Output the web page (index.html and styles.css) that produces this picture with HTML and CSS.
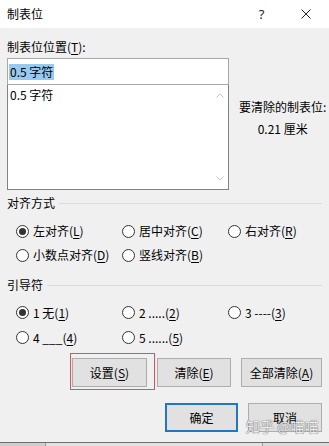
FILE: index.html
```html
<!DOCTYPE html>
<html lang="zh-CN">
<head>
    <meta charset="UTF-8">
    <meta name="viewport" content="width=device-width, initial-scale=1.0">
    <title>制表位</title>
    <link rel="stylesheet" href="styles.css">
</head>
<body>

    <div class="window">
        <div class="titlebar">
            <span class="title">制表位</span>
            <span class="tb-btn help">?</span>
            <span class="tb-btn close">
                <svg width="10" height="10" viewBox="0 0 10 10"><path d="M0.5 0.5 L9.5 9.5 M9.5 0.5 L0.5 9.5" stroke="#222" stroke-width="1" fill="none"/></svg>
            </span>
        </div>

        <div class="dialog">
            <div class="field-label">制表位位置(<u>T</u>):</div>

            <div class="tabs-area">
                <div class="tab-list">
                    <div class="tab-input"><span class="sel">0.5 字符</span></div>
                    <div class="listbox">
                        <div class="list-items">
                            <div class="list-item">0.5 字符</div>
                        </div>
                        <div class="scrollbar">
                            <span class="arrow"><svg width="8" height="5" viewBox="0 0 8 5"><path d="M0.5 4.5 L4 1 L7.5 4.5" stroke="#c4c4c4" fill="none"/></svg></span>
                            <span class="arrow"><svg width="8" height="5" viewBox="0 0 8 5"><path d="M0.5 0.5 L4 4 L7.5 0.5" stroke="#c4c4c4" fill="none"/></svg></span>
                        </div>
                    </div>
                </div>
                <div class="clear-info">
                    <div>要清除的制表位:</div>
                    <div>0.21 厘米</div>
                </div>
            </div>

            <div class="group-head">
                <span>对齐方式</span>
                <span class="rule"></span>
            </div>
            <div class="radio-grid align-grid">
                <label class="radio checked"><span class="dot"></span><span>左对齐(<u>L</u>)</span></label>
                <label class="radio"><span class="dot"></span><span>居中对齐(<u>C</u>)</span></label>
                <label class="radio"><span class="dot"></span><span>右对齐(<u>R</u>)</span></label>
                <label class="radio"><span class="dot"></span><span>小数点对齐(<u>D</u>)</span></label>
                <label class="radio"><span class="dot"></span><span>竖线对齐(<u>B</u>)</span></label>
            </div>

            <div class="group-head leader-head">
                <span>引导符</span>
                <span class="rule"></span>
            </div>
            <div class="radio-grid leader-grid">
                <label class="radio checked"><span class="dot"></span><span>1 无(<u>1</u>)</span></label>
                <label class="radio"><span class="dot"></span><span>2 .....(<u>2</u>)</span></label>
                <label class="radio"><span class="dot"></span><span>3 ----(<u>3</u>)</span></label>
                <label class="radio"><span class="dot"></span><span>4 ___(<u>4</u>)</span></label>
                <label class="radio"><span class="dot"></span><span>5 ......(<u>5</u>)</span></label>
            </div>

            <div class="btn-row">
                <button class="btn btn-set">设置(<u>S</u>)</button>
                <button class="btn btn-clear">清除(<u>E</u>)</button>
                <button class="btn btn-clear-all">全部清除(<u>A</u>)</button>
            </div>

            <div class="btn-row ok-row">
                <button class="btn btn-ok">确定</button>
                <button class="btn btn-cancel">取消</button>
            </div>
        </div>

        <span class="watermark">知乎 @喵喵</span>
    </div>

    <div class="taskstrip">
        <span class="seg seg-a"></span>
        <span class="seg seg-b"></span>
        <span class="seg seg-c"></span>
    </div>

</body>
</html>
```

FILE: styles.css
```css
* {
    box-sizing: border-box;
}
body {
    margin: 0;
    background: #f0f0f0;
    font-family: "Noto Sans CJK SC", "Noto Sans", sans-serif;
    font-size: 12px;
    color: #000;
}
u {
    text-decoration: underline;
    text-underline-offset: 2px;
}

.window {
    position: relative;
    height: 443px;
    background: #f0f0f0;
    border-bottom: 1px solid #6e6e6e;
}

/* Title bar */
.titlebar {
    display: flex;
    align-items: center;
    height: 28px;
    padding-left: 7px;
    background: #fff;
}
.title {
    flex: 1;
    line-height: 18px;
}
.tb-btn {
    display: flex;
    align-items: center;
    justify-content: center;
    width: 46px;
    height: 28px;
}
.help {
    font-family: "Noto Sans", sans-serif;
    font-size: 13px;
    color: #222;
    padding-left: 3px;
}

/* Dialog body */
.dialog {
    padding: 0 7px;
}
.field-label {
    margin-top: 10px;
    line-height: 18px;
}
.tabs-area {
    display: grid;
    grid-template-columns: 222px 1fr;
    margin-top: 2px;
}
.tab-input {
    display: flex;
    align-items: center;
    height: 27px;
    padding-left: 1px;
    background: #fff;
    border: 1px solid #a8a8a8;
}
.sel {
    background: #99c9ef;
    padding: 0 1px;
    line-height: 16px;
}
.listbox {
    display: flex;
    height: 105px;
    background: #fff;
    border: 1px solid #828282;
    border-top: none;
}
.list-items {
    flex: 1;
    padding: 2px 0 0 2px;
}
.list-item {
    line-height: 16px;
}
.scrollbar {
    display: flex;
    flex-direction: column;
    justify-content: space-between;
    width: 17px;
}
.arrow {
    display: flex;
    align-items: center;
    justify-content: center;
    height: 21px;
}
.clear-info {
    padding: 38px 0 0 10px;
    text-align: center;
    line-height: 22px;
    white-space: nowrap;
}

/* Groups */
.group-head {
    display: flex;
    align-items: center;
    margin-top: 4px;
    line-height: 18px;
}
.group-head .rule {
    flex: 1;
    height: 1px;
    margin-left: 4px;
    background: #dcdcdc;
}
.leader-head {
    margin-top: 9px;
}
.radio-grid {
    display: grid;
    grid-template-columns: 106px 106px 1fr;
    padding-left: 9px;
    margin-top: 7px;
}
.align-grid {
    grid-auto-rows: 24px;
}
.leader-grid {
    grid-auto-rows: 25px;
    margin-top: 6px;
}
.radio {
    display: flex;
    align-items: center;
    gap: 4px;
    line-height: 16px;
    white-space: nowrap;
}
.dot {
    position: relative;
    flex: none;
    width: 13px;
    height: 13px;
    border: 1px solid #333;
    border-radius: 50%;
    background: #fff;
}
.radio.checked .dot::after {
    content: "";
    position: absolute;
    left: 2px;
    top: 2px;
    width: 7px;
    height: 7px;
    border-radius: 50%;
    background: #333;
}

/* Buttons */
.btn-row {
    display: flex;
    justify-content: flex-end;
    gap: 10px;
    margin-top: 8px;
}
.ok-row {
    margin-top: 16px;
}
.btn {
    height: 29px;
    padding: 0;
    background: #e1e1e1;
    border: 1px solid #adadad;
    font-family: inherit;
    font-size: 12px;
    color: #000;
}
.btn-set {
    position: relative;
    width: 75px;
}
.btn-set::after {
    content: "";
    position: absolute;
    top: -6px;
    left: -3px;
    right: -9px;
    bottom: -4px;
    border: 1px solid #d9535a;
}
.btn-clear {
    width: 74px;
}
.btn-clear-all {
    width: 81px;
}
.btn-ok {
    width: 73px;
    border: 2px solid #2177c0;
}
.btn-cancel {
    width: 74px;
}

.watermark {
    position: absolute;
    left: 246px;
    top: 416px;
    font-size: 14px;
    color: rgba(255, 255, 255, 0.9);
    text-shadow: 0 0 1px #666, 0 0 1px #666;
}

/* bit of the window behind */
.taskstrip {
    display: flex;
    height: 3px;
}
.seg-a {
    width: 45px;
    background: #cfcfcf;
}
.seg-b {
    width: 217px;
    background: #e2e2e2;
    border-left: 1px solid #9a9a9a;
}
.seg-c {
    flex: 1;
    background: #dadada;
    border-left: 1px solid #9a9a9a;
}
```
